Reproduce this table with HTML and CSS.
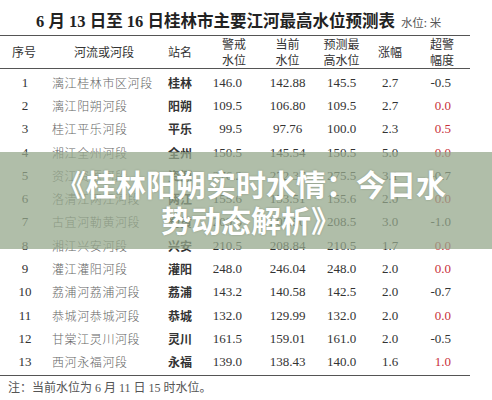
FILE: index.html
```html
<!DOCTYPE html>
<html lang="zh-CN">
<head>
<meta charset="utf-8">
<title>桂林市主要江河最高水位预测表</title>
<link rel="stylesheet" href="styles.css">
</head>
<body>
<div class="page">
  <div class="title-row">
    <h1 class="title">6 月 13 日至 16 日桂林市主要江河最高水位预测表</h1>
    <span class="unit">水位: 米</span>
  </div>
  <div class="table">
    <div class="head">
      <div class="hc">序号</div>
      <div class="hc">河流或河段</div>
      <div class="hc">站名</div>
      <div class="hc two">警戒<br>水位</div>
      <div class="hc two">当前<br>水位</div>
      <div class="hc two">预测最<br>高水位</div>
      <div class="hc">涨幅</div>
      <div class="hc two">超警<br>幅度</div>
    </div>
    <div class="body">
      <div class="row"><span class="c-no">1</span><span class="c-river">漓江桂林市区河段</span><span class="c-st">桂林</span><span class="c-warn">146.0</span><span class="c-cur">142.88</span><span class="c-pre">145.5</span><span class="c-up">2.7</span><span class="c-ov">-0.5</span></div>
      <div class="row"><span class="c-no">2</span><span class="c-river">漓江阳朔河段</span><span class="c-st">阳朔</span><span class="c-warn">109.5</span><span class="c-cur">106.80</span><span class="c-pre">109.5</span><span class="c-up">2.7</span><span class="c-ov red">0.0</span></div>
      <div class="row"><span class="c-no">3</span><span class="c-river">桂江平乐河段</span><span class="c-st">平乐</span><span class="c-warn">99.5</span><span class="c-cur">97.76</span><span class="c-pre">100.0</span><span class="c-up">2.3</span><span class="c-ov red">0.5</span></div>
      <div class="row"><span class="c-no">4</span><span class="c-river">湘江全州河段</span><span class="c-st">全州</span><span class="c-warn">150.5</span><span class="c-cur">145.54</span><span class="c-pre">150.5</span><span class="c-up">5.0</span><span class="c-ov red">0.0</span></div>
      <div class="row"><span class="c-no">5</span><span class="c-river">资江资源河段</span><span class="c-st">资源</span><span class="c-warn">276.2</span><span class="c-cur">272.37</span><span class="c-pre">275.5</span><span class="c-up">3.1</span><span class="c-ov">-0.7</span></div>
      <div class="row"><span class="c-no">6</span><span class="c-river">洛清江两江河段</span><span class="c-st">两江</span><span class="c-warn">155.6</span><span class="c-cur">153.51</span><span class="c-pre">155.6</span><span class="c-up">2.0</span><span class="c-ov red">0.0</span></div>
      <div class="row"><span class="c-no">7</span><span class="c-river">古宜河勒黄河段</span><span class="c-st">勒黄</span><span class="c-warn">209.5</span><span class="c-cur">205.50</span><span class="c-pre">208.5</span><span class="c-up">3.0</span><span class="c-ov">-1.0</span></div>
      <div class="row"><span class="c-no">8</span><span class="c-river">湘江兴安河段</span><span class="c-st">兴安</span><span class="c-warn">210.5</span><span class="c-cur">208.84</span><span class="c-pre">210.5</span><span class="c-up">1.7</span><span class="c-ov red">0.0</span></div>
      <div class="row"><span class="c-no">9</span><span class="c-river">灌江灌阳河段</span><span class="c-st">灌阳</span><span class="c-warn">248.0</span><span class="c-cur">246.04</span><span class="c-pre">248.0</span><span class="c-up">2.0</span><span class="c-ov red">0.0</span></div>
      <div class="row"><span class="c-no">10</span><span class="c-river">荔浦河荔浦河段</span><span class="c-st">荔浦</span><span class="c-warn">143.2</span><span class="c-cur">140.58</span><span class="c-pre">142.5</span><span class="c-up">2.0</span><span class="c-ov">-0.7</span></div>
      <div class="row"><span class="c-no">11</span><span class="c-river">恭城河恭城河段</span><span class="c-st">恭城</span><span class="c-warn">132.0</span><span class="c-cur">129.99</span><span class="c-pre">132.0</span><span class="c-up">2.0</span><span class="c-ov red">0.0</span></div>
      <div class="row"><span class="c-no">12</span><span class="c-river">甘棠江灵川河段</span><span class="c-st">灵川</span><span class="c-warn">161.5</span><span class="c-cur">159.01</span><span class="c-pre">161.0</span><span class="c-up">2.0</span><span class="c-ov">-0.5</span></div>
      <div class="row"><span class="c-no">13</span><span class="c-river">西河永福河段</span><span class="c-st">永福</span><span class="c-warn">139.0</span><span class="c-cur">138.43</span><span class="c-pre">140.0</span><span class="c-up">1.6</span><span class="c-ov red">1.0</span></div>
    </div>
  </div>
  <p class="note">注：当前水位为 6 月 11 日 15 时水位。</p>
  <div class="banner">
    <div class="banner-text">《桂林阳朔实时水情：今日水势动态解析》</div>
  </div>
</div>
</body>
</html>
```

FILE: styles.css
```css
html, body {
  margin: 0;
  padding: 0;
  background: #ffffff;
}
.page {
  position: relative;
  width: 492px;
  height: 400px;
  overflow: hidden;
  font-family: "Liberation Serif", "Noto Sans CJK SC", serif;
  color: #333;
}
.title-row {
  display: flex;
  align-items: baseline;
  height: 35px;
  box-sizing: border-box;
  padding: 11px 0 0 36px;
}
.title {
  margin: 0;
  font-size: 16.5px;
  line-height: 22px;
  font-weight: 700;
  color: #222;
  letter-spacing: 0;
}
.unit {
  margin-left: 6px;
  font-size: 11.5px;
  color: #555;
  font-family: "Noto Sans CJK SC", sans-serif;
}
.table {
  width: 470px;
  border-top: 1.5px solid #555;
  border-bottom: 1.5px solid #555;
}
.head, .row {
  display: grid;
  grid-template-columns: 48px 112px 40px 58px 59px 49px 48px 56px;
}
.head {
  height: 32px;
  border-bottom: 1.5px solid #555;
  align-items: center;
}
.hc {
  text-align: center;
  font-family: "Noto Sans CJK SC", sans-serif;
  font-size: 12px;
  line-height: 16px;
  color: #333;
}
.hc:nth-child(4) { padding-left: 10px; }
.body {
  padding: 2px 0 1px;
}
.row {
  height: 23.3px;
  align-items: center;
  font-size: 13px;
  line-height: 16px;
  color: #333;
}
.c-no { text-align: center; padding-left: 2px; }
.c-river {
  padding-left: 4px;
  font-family: "Noto Sans CJK SC", sans-serif;
  font-size: 12px;
  font-weight: 300;
  letter-spacing: 0.6px;
  color: #666;
}
.c-st {
  text-align: center;
  font-family: "Noto Sans CJK SC", sans-serif;
  font-size: 12px;
  font-weight: 700;
  color: #333;
}
.c-warn { text-align: right; padding-right: 16px; }
.c-cur { text-align: center; }
.c-pre { text-align: center; }
.c-up { text-align: center; }
.c-ov { text-align: right; padding-right: 19px; }
.red { color: #c8303a; }
.note {
  margin: 4px 0 0 8px;
  font-family: "Liberation Serif", "Noto Sans CJK SC", serif;
  font-size: 12px;
  line-height: 16px;
  color: #555;
}
.banner {
  position: absolute;
  left: 0;
  top: 152px;
  width: 492px;
  height: 97px;
  background: rgba(150, 168, 140, 0.75);
  display: flex;
  align-items: center;
  justify-content: center;
}
.banner-text {
  width: 405px;
  margin-left: 10px;
  text-align: center;
  font-family: "Noto Sans CJK SC", sans-serif;
  font-size: 30px;
  line-height: 36px;
  font-weight: 700;
  color: #ffffff;
  text-shadow: 0 0 2px rgba(80, 90, 70, 0.4);
}
```
